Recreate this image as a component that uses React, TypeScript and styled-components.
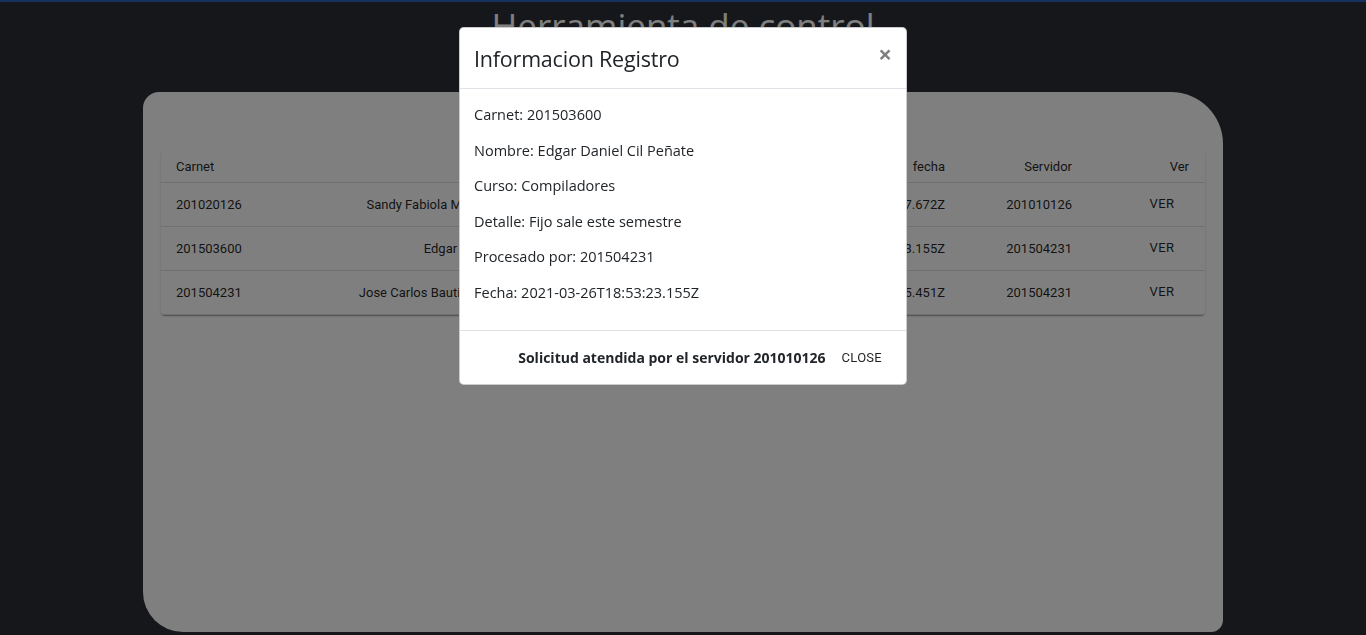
import React from "react";
import styled, { createGlobalStyle } from "styled-components";

const GlobalStyle = createGlobalStyle`
  html, body { margin: 0; padding: 0; }
  body {
    background: #2c2f36;
    font-family: "Open Sans", "Noto Sans", sans-serif;
    overflow: hidden;
  }
  * { box-sizing: border-box; }
`;

const Page = styled.div`
  height: 635px;
  display: flex;
  flex-direction: column;
  align-items: center;
`;

const TopLine = styled.div`
  align-self: stretch;
  height: 2px;
  background: #2a63c0;
`;

const Title = styled.h1`
  margin: 3px 0 45px;
  font-family: "Open Sans", sans-serif;
  font-weight: 500;
  font-size: 35px;
  line-height: 42px;
  color: #ffffff;
`;

const Panel = styled.section`
  width: 1080px;
  height: 540px;
  background: #ffffff;
  border-radius: 16px 52px 12px 40px;
  padding: 59px 18px 0;
`;

const Paper = styled.div`
  background: #fff;
  border-radius: 4px;
  box-shadow: 0 2px 1px -1px rgba(0,0,0,0.2), 0 1px 1px 0 rgba(0,0,0,0.14), 0 1px 3px 0 rgba(0,0,0,0.12);
  overflow: hidden;
`;

const Table = styled.table`
  width: 100%;
  border-collapse: collapse;
  table-layout: fixed;
  font-family: Roboto, "Liberation Sans", sans-serif;
  font-size: 13px;
  color: rgba(0,0,0,0.87);
`;

const HeadCell = styled.th<{ $align?: string }>`
  height: 31px;
  padding: 0 16px 0 15px;
  font-weight: 400;
  text-align: ${(p) => p.$align || "left"};
  border-bottom: 1px solid rgba(224,224,224,1);
  white-space: nowrap;
  overflow: hidden;
`;

const Cell = styled.td<{ $align?: string; $pr?: number }>`
  height: 44px;
  padding: 0 ${(p) => p.$pr ?? 16}px 0 15px;
  text-align: ${(p) => p.$align || "left"};
  border-bottom: 1px solid rgba(224,224,224,1);
  white-space: nowrap;
  overflow: hidden;
`;

const VerButton = styled.button`
  min-width: 64px;
  padding: 6px 8px;
  border: 0;
  background: transparent;
  font-family: Roboto, sans-serif;
  font-weight: 400;
  font-size: 13px;
  color: rgba(0,0,0,0.87);
  text-transform: uppercase;
  letter-spacing: 0.02857em;
  line-height: 1.75;
`;

const Backdrop = styled.div`
  position: fixed;
  inset: 0;
  background: rgba(0,0,0,0.5);
`;

const Modal = styled.div`
  position: fixed;
  top: 27px;
  left: 459px;
  width: 448px;
  background: #fff;
  border: 1px solid rgba(0,0,0,0.2);
  border-radius: 4.8px;
  display: flex;
  flex-direction: column;
  color: #212529;
`;

const ModalHeader = styled.div`
  display: flex;
  justify-content: space-between;
  align-items: flex-start;
  padding: 16px 14px 15px 14px;
  border-bottom: 1px solid #dee2e6;
`;

const ModalTitle = styled.h4`
  margin: 0;
  font-family: "Open Sans", sans-serif;
  font-weight: 400;
  font-size: 21.5px;
  line-height: 29px;
  letter-spacing: -0.2px;
`;

const CloseX = styled.button`
  border: 0;
  background: transparent;
  padding: 0;
  margin: -2px 0 0;
  font-family: "Open Sans", sans-serif;
  font-size: 24px;
  font-weight: 700;
  line-height: 1;
  color: #000;
  opacity: 0.5;
`;

const ModalBody = styled.div`
  padding: 15px 14px 13px;
`;

const Line = styled.p`
  margin: 0 0 14.5px;
  font-size: 14.5px;
  line-height: 21px;
`;

const ModalFooter = styled.div`
  display: flex;
  justify-content: flex-end;
  align-items: center;
  gap: 12px;
  height: 54px;
  padding: 0 20px 0 12px;
  border-top: 1px solid #dee2e6;
`;

const FooterText = styled.span`
  font-weight: 700;
  font-size: 14px;
`;

const CloseButton = styled.button`
  border: 0;
  background: transparent;
  padding: 4px 4px;
  font-family: Roboto, sans-serif;
  font-size: 13px;
  color: rgba(0,0,0,0.87);
  letter-spacing: 0.02em;
`;

const rows = [
  ["201020126", "Sandy Fabiola Méndez Rodríguez", "Compiladores", "Ok", "2021-03-26T18:53:27.672Z", "201010126"],
  ["201503600", "Edgar Daniel Cil Peñate", "Compiladores", "Fijo", "2021-03-26T18:53:23.155Z", "201504231"],
  ["201504231", "Jose Carlos Bautista Hernández L.", "Compiladores", "Ok", "2021-03-26T18:53:25.451Z", "201504231"],
];

export default function App() {
  return (
    <>
      <GlobalStyle />
      <Page>
        <TopLine />
        <Title>Herramienta de control</Title>
        <Panel>
          <Paper>
            <Table>
              <colgroup>
                <col style={{ width: 180 }} />
                <col style={{ width: 233 }} />
                <col style={{ width: 116 }} />
                <col style={{ width: 70 }} />
                <col style={{ width: 201 }} />
                <col style={{ width: 127 }} />
                <col style={{ width: 117 }} />
              </colgroup>
              <thead>
                <tr>
                  <HeadCell>Carnet</HeadCell>
                  <HeadCell $align="right">Nombre</HeadCell>
                  <HeadCell $align="right">Curso</HeadCell>
                  <HeadCell $align="right">Detalle</HeadCell>
                  <HeadCell $align="right">fecha</HeadCell>
                  <HeadCell $align="right">Servidor</HeadCell>
                  <HeadCell $align="right">Ver</HeadCell>
                </tr>
              </thead>
              <tbody>
                {rows.map((r) => (
                  <tr key={r[0]}>
                    <Cell>{r[0]}</Cell>
                    <Cell $align="right">{r[1]}</Cell>
                    <Cell $align="right">{r[2]}</Cell>
                    <Cell $align="right">{r[3]}</Cell>
                    <Cell $align="right">{r[4]}</Cell>
                    <Cell $align="right">{r[5]}</Cell>
                    <Cell $align="right" $pr={11}>
                      <VerButton>Ver</VerButton>
                    </Cell>
                  </tr>
                ))}
              </tbody>
            </Table>
          </Paper>
        </Panel>
      </Page>
      <Backdrop />
      <Modal>
        <ModalHeader>
          <ModalTitle>Informacion Registro</ModalTitle>
          <CloseX>×</CloseX>
        </ModalHeader>
        <ModalBody>
          <Line>Carnet: 201503600</Line>
          <Line>Nombre: Edgar Daniel Cil Peñate</Line>
          <Line>Curso: Compiladores</Line>
          <Line>Detalle: Fijo sale este semestre</Line>
          <Line>Procesado por: 201504231</Line>
          <Line>Fecha: 2021-03-26T18:53:23.155Z</Line>
        </ModalBody>
        <ModalFooter>
          <FooterText>Solicitud atendida por el servidor 201010126</FooterText>
          <CloseButton>CLOSE</CloseButton>
        </ModalFooter>
      </Modal>
    </>
  );
}
